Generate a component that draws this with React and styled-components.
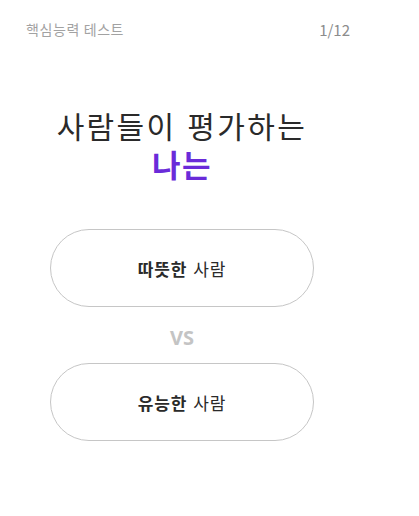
import React from 'react';
import styled, { createGlobalStyle } from 'styled-components';

const GlobalStyle = createGlobalStyle`
  html, body {
    margin: 0;
    padding: 0;
    background: #ffffff;
  }
  body {
    font-family: "Noto Sans CJK KR", "Noto Sans", sans-serif;
    color: #222;
  }
`;

const Page = styled.div`
  width: 364px;
  display: flex;
  flex-direction: column;
  align-items: center;
`;

const Header = styled.header`
  align-self: stretch;
  display: flex;
  justify-content: space-between;
  align-items: center;
  padding: 18px 14px 0 26px;
  height: 22px;
`;

const HeaderTitle = styled.span`
  font-size: 14px;
  color: #a2a2a2;
  letter-spacing: 0.6px;
`;

const Counter = styled.span`
  font-size: 15px;
  color: #8c8c8c;
`;

const Title = styled.h1`
  margin: 68px 0 0;
  font-family: "Liberation Sans", "Noto Sans CJK KR", sans-serif;
  font-size: 30px;
  font-weight: 400;
  line-height: 39px;
  letter-spacing: 2.4px;
  text-align: center;
  color: #2a2a2a;
`;

const Highlight = styled.strong`
  display: block;
  color: #6a2bd9;
  font-weight: 700;
  font-size: 31px;
  letter-spacing: 1.5px;
`;

const Choices = styled.div`
  margin-top: 43px;
  display: flex;
  flex-direction: column;
  align-items: center;
`;

const Choice = styled.button`
  width: 264px;
  height: 78px;
  border-radius: 39px;
  border: 1px solid #c6c6c6;
  background: #fff;
  font-family: inherit;
  font-size: 17px;
  letter-spacing: 0.9px;
  color: #2a2a2a;
  cursor: pointer;
  display: flex;
  align-items: center;
  justify-content: center;
  gap: 6px;
`;

const Strong = styled.span`
  font-weight: 700;
`;

const Versus = styled.div`
  font-family: "Noto Sans", sans-serif;
  font-size: 20px;
  font-weight: 700;
  color: #c4c4c4;
  height: 56px;
  line-height: 56px;
  padding-top: 3px;
  box-sizing: border-box;
`;

const options = [
  { key: 'warm', label: '따뜻한' },
  { key: 'able', label: '유능한' },
];

export default function App() {
  return (
    <>
      <GlobalStyle />
      <Page>
        <Header>
          <HeaderTitle>핵심능력 테스트</HeaderTitle>
          <Counter>1/12</Counter>
        </Header>
        <Title>
          사람들이 평가하는
          <Highlight>나는</Highlight>
        </Title>
        <Choices>
          {options.map((opt, i) => (
            <React.Fragment key={opt.key}>
              {i > 0 && <Versus>VS</Versus>}
              <Choice>
                <Strong>{opt.label}</Strong>
                <span>사람</span>
              </Choice>
            </React.Fragment>
          ))}
        </Choices>
      </Page>
    </>
  );
}
